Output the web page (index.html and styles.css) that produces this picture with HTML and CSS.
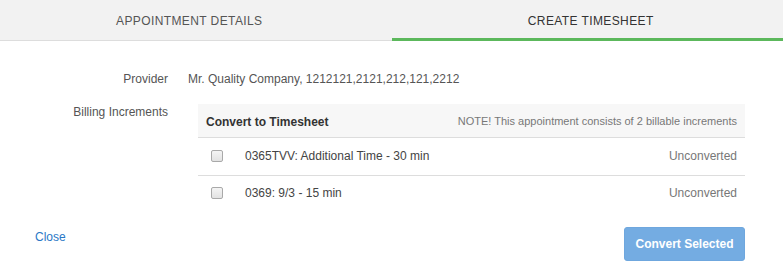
FILE: index.html
```
<!DOCTYPE html>
<html lang="en">
<head>
    <meta charset="UTF-8">
    <title>Create Timesheet</title>
    <link rel="stylesheet" href="styles.css">
</head>
<body>

    <!-- Tabs -->
    <div class="tabs">
        <a class="tab">APPOINTMENT DETAILS</a>
        <a class="tab active">CREATE TIMESHEET</a>
    </div>

    <!-- Content -->
    <div class="content">
        <div class="form-row">
            <div class="label">Provider</div>
            <div class="value">Mr. Quality Company, 1212121,2121,212,121,2212</div>
        </div>

        <div class="form-row billing">
            <div class="label">Billing Increments</div>
            <div class="increments">
                <div class="inc-header">
                    <span class="inc-title">Convert to Timesheet</span>
                    <span class="inc-note">NOTE! This appointment consists of 2 billable increments</span>
                </div>
                <div class="inc-row">
                    <input type="checkbox">
                    <span class="inc-name">0365TVV: Additional Time - 30 min</span>
                    <span class="inc-status">Unconverted</span>
                </div>
                <div class="inc-row">
                    <input type="checkbox">
                    <span class="inc-name">0369: 9/3 - 15 min</span>
                    <span class="inc-status">Unconverted</span>
                </div>
            </div>
        </div>
    </div>

    <!-- Footer -->
    <div class="footer">
        <a href="#" class="close-link">Close</a>
        <button class="btn-convert" disabled>Convert Selected</button>
    </div>

</body>
</html>
```

FILE: styles.css
```
/* General Styles */
* {
    margin: 0;
    padding: 0;
    box-sizing: border-box;
}

body {
    font-family: "Liberation Sans", Arial, sans-serif;
    font-size: 12px;
    color: #555;
    background-color: #fff;
}

/* Tabs */
.tabs {
    display: flex;
    height: 41px;
    background-color: #f2f2f2;
    border-bottom: 1px solid #ddd;
}

.tab {
    flex: 0 0 50%;
    display: flex;
    align-items: center;
    justify-content: center;
    font-size: 12px;
    color: #555;
    padding: 1px 13px 0 0;
    letter-spacing: 0.4px;
}

.tab.active {
    color: #333;
    border-bottom: 3px solid #5cb85c;
    margin-bottom: -1px;
    padding: 4px 0 0 7px;
}

/* Content */
.content {
    padding: 30px 38px 0 0;
}

.form-row {
    display: flex;
}

.label {
    flex-shrink: 0;
    width: 168px;
    text-align: right;
    line-height: 17px;
}

.value {
    margin-left: 20px;
    line-height: 17px;
}

.billing {
    margin-top: 16px;
}

.increments {
    flex: 1;
    margin-left: 30px;
}

.inc-header {
    display: flex;
    justify-content: space-between;
    align-items: center;
    height: 34px;
    padding: 0 8px;
    background-color: #f7f7f7;
    border-bottom: 1px solid #ddd;
}

.inc-title {
    font-weight: bold;
    color: #333;
    padding-top: 2px;
}

.inc-note {
    font-size: 11px;
    color: #777;
}

.inc-row {
    display: flex;
    align-items: center;
    height: 38px;
    padding: 0 8px 2px 13px;
    border-bottom: 1px solid #ddd;
}

.inc-row:last-child {
    border-bottom: none;
    height: 33px;
    padding-bottom: 0;
}

.inc-row input {
    appearance: none;
    -webkit-appearance: none;
    width: 12px;
    height: 12px;
    margin: 1px 22px 0 0;
    border: 1px solid #a9a9a9;
    border-radius: 2px;
    background: linear-gradient(#f4f4f4, #e2e2e2);
}

.inc-name {
    flex: 1;
    color: #444;
}

.inc-status {
    color: #777;
}

/* Footer */
.footer {
    display: flex;
    justify-content: space-between;
    align-items: flex-start;
    padding: 20px 38px 0 35px;
}

.close-link {
    color: #2a78c6;
    text-decoration: none;
    margin-top: 1px;
}

.btn-convert {
    width: 121px;
    height: 34px;
    font-family: "Liberation Sans", Arial, sans-serif;
    font-size: 12px;
    font-weight: bold;
    color: #fff;
    background-color: #74ace2;
    border: 1px solid #6fa7de;
    border-radius: 3px;
    margin-top: -2px;
}
```
